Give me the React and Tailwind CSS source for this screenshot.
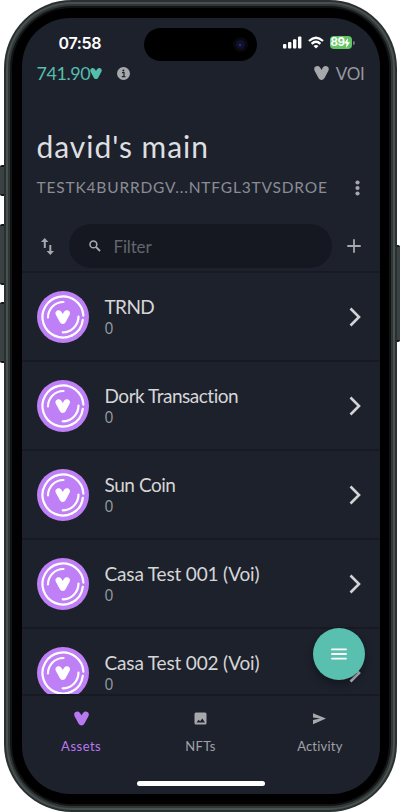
import React from "react";

const assets = [
  { name: "TRND", tracking: "tracking-[-0.6px]" },
  { name: "Dork Transaction", tracking: "tracking-[-0.48px]" },
  { name: "Sun Coin", tracking: "tracking-[-0.45px]" },
  { name: "Casa Test 001 (Voi)", tracking: "tracking-[-0.16px]" },
  { name: "Casa Test 002 (Voi)", tracking: "tracking-[-0.16px]" },
];

const heart = "M0.6 5 C-0.8 1.6 1.6 0 3.6 0 C5.8 0 6.6 1.8 8 4.2 C9.4 1.8 10.2 0 12.4 0 C14.4 0 16.8 1.6 15.4 5 L11.2 12.8 C9.8 15.6 6.2 15.6 4.8 12.8 Z";

function VoiMark({ className }) {
  return (
    <svg viewBox="0 0 16 15" className={className}>
      <path d={heart} fill="currentColor" />
    </svg>
  );
}

function Token() {
  return (
    <svg viewBox="0 0 52 52" className="h-[52px] w-[52px] shrink-0">
      <circle cx="26" cy="26" r="26" fill="#bf80f7" />
      <g fill="none" stroke="#fff" strokeWidth="2.2" strokeLinecap="round">
        <path d="M46.4 24.6 A20.5 20.5 0 1 0 34.8 44.5" />
        <path d="M11 26.5 A15.5 15.5 0 0 1 26.5 11" />
        <path d="M41.5 25.5 A15.8 15.8 0 0 1 25.7 41.3" />
        <path d="M45.8 28.8 A20.2 20.2 0 0 1 34.8 44.5" />
      </g>
      <g transform="translate(18.3 19.2) scale(0.93)">
        <path d={heart} fill="#fff" />
      </g>
    </svg>
  );
}

function AssetRow({ name, tracking }) {
  return (
    <div className="flex h-[89px] shrink-0 items-center border-b-2 border-[#171a24] pl-[15px] pr-[19px]">
      <Token />
      <div className="ml-4 flex-1">
        <div className={"text-[19px] leading-[22px] text-[#d5d6d7] " + tracking}>{name}</div>
        <div className="font-['Open_Sans',sans-serif] text-[15.5px] leading-5 text-[#9a9ca1]">0</div>
      </div>
      <svg viewBox="0 0 12 20" className="h-5 w-3" fill="none" stroke="#d2d3d5" strokeWidth="2.6">
        <path d="M1.5 1.5 L10 10 L1.5 18.5" />
      </svg>
    </div>
  );
}

function StatusBar() {
  return (
    <div className="relative flex h-[44px] items-center">
      <div className="ml-[37px] pt-[5px] font-['Inter',sans-serif] text-[16px] font-semibold leading-5 tracking-[-0.35px] text-white">07:58</div>
      <div className="absolute left-[122px] top-[10px] h-[33px] w-[113px] rounded-full bg-black">
        <div className="absolute left-[89px] top-[9px] flex h-[15px] w-[15px] items-center justify-center rounded-full bg-[#08080d]">
          <div className="h-[9px] w-[9px] rounded-full bg-[#101031]" />
          <div className="absolute h-[2px] w-[2px] rounded-full bg-[#38387a]" />
        </div>
      </div>
      <div className="ml-auto mr-[25px] flex items-center pt-[5px]">
        <svg viewBox="0 0 19 13" className="mr-[6px] h-[13px] w-[19px]" fill="#fff">
          <rect x="0" y="8" width="3.4" height="4.5" rx="1" />
          <rect x="5" y="6" width="3.4" height="6.5" rx="1" />
          <rect x="10" y="3.3" width="3.4" height="9.2" rx="1" />
          <rect x="15" y="0.6" width="3.4" height="11.9" rx="1" />
        </svg>
        <svg viewBox="0 0 16 13" className="mr-[6px] h-[13px] w-4" fill="none" stroke="#fff" strokeWidth="2.4">
          <path d="M1 5 Q8 -1.6 15 5" />
          <path d="M3.6 7.8 Q8 3.8 12.4 7.8" />
          <path d="M5.5 10 Q8 7.8 10.5 10 L8 12.6 Z" fill="#fff" stroke="none" />
        </svg>
        <div className="flex h-[13px] w-[22px] items-center justify-center rounded-[4px] bg-[#65c466] font-['Inter',sans-serif] text-[11.5px] font-bold leading-[13px] tracking-[-0.6px] text-white">
          89
          <svg viewBox="0 0 6 10" className="h-[10px] w-[6px]"><path d="M4 0 L0 5.6 H2.5 L2 10 L6 4.2 H3.5 Z" fill="#fff" /></svg>
        </div>
        <div className="ml-px h-1 w-[2px] rounded-r-full bg-[#73767c]" />
      </div>
    </div>
  );
}

export default function App() {
  return (
    <div className="relative h-[812px] w-[400px] overflow-hidden bg-white font-['Lato',sans-serif]">
      <div className="absolute left-0 top-[165px] h-[31px] w-[6px] rounded-l-[2px] border-y-2 border-[#151919] bg-[#3b4242]" />
      <div className="absolute left-0 top-[224px] h-[61px] w-[6px] rounded-l-[2px] border-y-2 border-[#151919] bg-[#3b4242]" />
      <div className="absolute left-0 top-[302px] h-[61px] w-[6px] rounded-l-[2px] border-y-2 border-[#151919] bg-[#3b4242]" />
      <div className="absolute right-0 top-[245px] h-[97px] w-[6px] rounded-r-[2px] border-y-2 border-[#151919] bg-[#3b4242]" />

      <div className="relative ml-1 h-[812px] w-[393px] rounded-[68px] bg-[#2a2f2f] p-[2px]">
        <div className="h-full w-full rounded-[66px] bg-[#485050] p-[2px]">
          <div className="h-full w-full rounded-[64px] bg-[#303636] p-[2px]">
            <div className="h-full w-full rounded-[62px] bg-[#121414] p-[2px]">
              <div className="h-full w-full rounded-[60px] bg-black px-[9.5px] pt-[10px]">
                <main className="relative flex h-[776px] w-[358px] flex-col overflow-hidden rounded-[48px] bg-[#1d212c]">
                  <StatusBar />
                  <div className="-mt-px flex h-[24px] items-center pl-[15px] pr-[15px]">
                    <span className="text-[18px] font-normal leading-5 tracking-[-0.45px] text-[#55bdae]">741.90</span>
                    <VoiMark className="h-[11px] w-[12px] text-[#55bdae]" />
                    <svg viewBox="0 0 13 13" className="ml-[15px] h-[13px] w-[13px]">
                      <circle cx="6.5" cy="6.5" r="6.5" fill="#a6a8ac" />
                      <path d="M5 5.7 H7 V9.4 M4.8 9.6 H8.4" stroke="#1e212c" strokeWidth="1.2" fill="none" />
                      <circle cx="6.4" cy="3.4" r="1" fill="#1e212c" />
                    </svg>
                    <VoiMark className="ml-auto mr-[7px] h-[14px] w-[15px] text-[#a6a8ac]" />
                    <span className="pt-px text-[17px] font-normal leading-5 tracking-[-0.3px] text-[#96989d]">VOI</span>
                  </div>
                  <h1 className="ml-[15px] mt-[43px] text-[30px] font-normal leading-9 tracking-[0.95px] text-[#dedfe0]">david's main</h1>
                  <div className="mt-[12px] flex h-[24px] items-center pl-[15px] pr-[20px]">
                    <span className="text-[15.5px] tracking-[0.82px] text-[#8b8d93]">TESTK4BURRDGV...NTFGL3TVSDROE</span>
                    <svg viewBox="0 0 5 16" className="ml-auto h-4 w-[5px]" fill="#a6a8ac">
                      <circle cx="2.5" cy="2.5" r="2.1" /><circle cx="2.5" cy="8" r="2.1" /><circle cx="2.5" cy="13.5" r="2.1" />
                    </svg>
                  </div>
                  <div className="mt-[24px] flex h-[44px] shrink-0 items-center pl-[19px] pr-[19px]">
                    <svg viewBox="0 0 13 17" className="h-[17px] w-[13px]" fill="#a6a8ac">
                      <path d="M3.7 0 L0 4 H2.8 V10 H4.8 V4 H7.4 Z" />
                      <path d="M9.3 17 L5.6 13 H8.3 V7 H10.3 V13 H13 Z" />
                    </svg>
                    <div className="ml-[15px] flex h-full w-[263px] items-center rounded-full bg-[#151821] pl-5">
                      <svg viewBox="0 0 12 12" className="h-3 w-3" fill="none" stroke="#a6a8ac" strokeWidth="1.6">
                        <circle cx="4.4" cy="4.4" r="3.4" /><path d="M6.9 6.9 L11 11" strokeWidth="1.9" />
                      </svg>
                      <span className="ml-[13px] pt-px text-[17px] tracking-[-0.15px] text-[#63666d]">Filter</span>
                    </div>
                    <svg viewBox="0 0 14 14" className="ml-auto h-[14px] w-[14px]" stroke="#a6a8ac" strokeWidth="1.8"><path d="M7 .3 V13.7 M.3 7 H13.7" /></svg>
                  </div>
                  <div className="mt-[3px] flex h-[425px] shrink-0 flex-col overflow-hidden border-y-2 border-[#171a24]">
                    {assets.map((asset) => <AssetRow key={asset.name} {...asset} />)}
                  </div>
                  <nav className="grid shrink-0 grid-cols-3 text-center text-[13px] tracking-[0.2px] text-[#a0a2a7]">
                    <div className="flex flex-col items-center pt-[15px] text-[#b878f0]">
                      <VoiMark className="h-[15px] w-[15px]" />
                      <span className="mt-[10px] leading-5 tracking-[0.5px]">Assets</span>
                    </div>
                    <div className="flex flex-col items-center pt-[15px]">
                      <svg viewBox="0 0 15 15" className="h-[15px] w-[15px]">
                        <rect x="1.5" y="1.5" width="12" height="12" rx="1.5" fill="#a6a8ac" />
                        <path d="M3.4 11.4 L5.6 8.8 L7.1 10.3 L9.3 7.6 L12 11.4 Z" fill="#1e212c" />
                      </svg>
                      <span className="mt-[10px] leading-5 tracking-[0.4px]">NFTs</span>
                    </div>
                    <div className="flex flex-col items-center pt-[15px]">
                      <svg viewBox="0 0 15 15" className="h-[15px] w-[15px]"><path d="M1 2.2 L14 7.6 L1 13.2 V9 L8 7.6 L1 6.5 Z" fill="#a6a8ac" /></svg>
                      <span className="mt-[10px] leading-5">Activity</span>
                    </div>
                  </nav>
                  <div className="absolute bottom-[8px] left-[115px] h-[5px] w-[128px] rounded-full bg-white" />
                  <button className="absolute left-[291px] top-[610px] flex h-[52px] w-[52px] items-center justify-center rounded-full bg-[#59bfaf] shadow-[0_4px_7px_rgba(10,12,18,0.5)]">
                    <svg viewBox="0 0 16 12" className="h-3 w-4" stroke="#fff" strokeWidth="1.8" strokeLinecap="round"><path d="M1 1.4 H15 M1 6 H15 M1 10.6 H15" /></svg>
                  </button>
                </main>
              </div>
            </div>
          </div>
        </div>
      </div>
    </div>
  );
}
